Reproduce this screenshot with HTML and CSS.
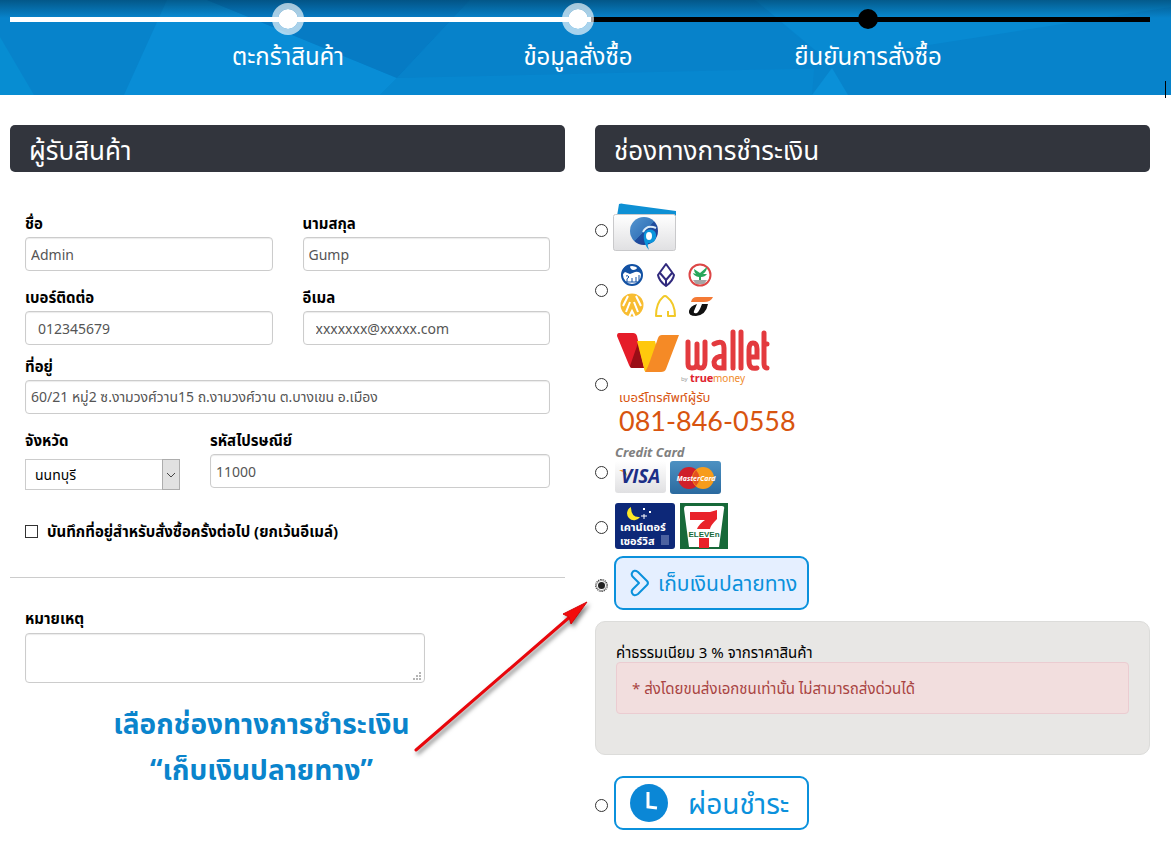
FILE: index.html
```html
<!DOCTYPE html>
<html lang="th">
    <head>
        <meta charset="UTF-8" />
        <meta name="viewport" content="width=device-width, initial-scale=1" />
        <title>ข้อมูลสั่งซื้อ</title>
        <link rel="stylesheet" href="styles.css">
    </head>

    <body>
        <header class="header">
            <svg class="header-bg" viewBox="0 0 1171 95" preserveAspectRatio="none" aria-hidden="true">
                <defs>
                    <linearGradient id="shade" x1="0" y1="0" x2="0" y2="1">
                        <stop offset="0" stop-color="#003a5c" stop-opacity=".6" />
                        <stop offset="1" stop-color="#003a5c" stop-opacity="0" />
                    </linearGradient>
                </defs>
                <rect width="1171" height="95" fill="#0783cb" />
                <path d="M0 37L34 95H0z" fill="#078dd2" />
                <path d="M167 0H207L397 78L380 95H124z" fill="#098dd6" />
                <path d="M207 0H470L397 78z" fill="#067bc4" />
                <path d="M397 78L815 58L812 95H380z" fill="#0787cf" />
                <path d="M470 0H755L833 68L397 78z" fill="#0782ca" />
                <path d="M775 0H1171V7L833 60L815 50L755 0z" fill="#088ad2" />
                <path d="M832 68L848 95H812z" fill="#0a90d8" />
                <rect width="1171" height="18" fill="url(#shade)" />
            </svg>
            <ol class="steps">
                <li class="step done"><span class="dot"></span>ตะกร้าสินค้า</li>
                <li class="step done"><span class="dot"></span>ข้อมูลสั่งซื้อ</li>
                <li class="step"><span class="dot"></span>ยืนยันการสั่งซื้อ</li>
            </ol>
            <span class="caret"></span>
        </header>

        <main class="checkout">
            <section class="column">
                <h2 class="title">ผู้รับสินค้า</h2>
                <form class="form">
                    <div class="row halves">
                        <div class="field">
                            <label for="firstName">ชื่อ</label>
                            <input class="input" type="text" id="firstName" value="Admin">
                        </div>
                        <div class="field">
                            <label for="lastName">นามสกุล</label>
                            <input class="input" type="text" id="lastName" value="Gump">
                        </div>
                    </div>
                    <div class="row halves tight">
                        <div class="field">
                            <label for="phone">เบอร์ติดต่อ</label>
                            <input class="input wide-pad" type="text" id="phone" value="012345679">
                        </div>
                        <div class="field">
                            <label for="email">อีเมล</label>
                            <input class="input wide-pad" type="text" id="email" value="xxxxxxx@xxxxx.com">
                        </div>
                    </div>
                    <div class="row">
                        <div class="field">
                            <label for="address">ที่อยู่</label>
                            <input class="input" type="text" id="address" value="60/21 หมู่2 ซ.งามวงศ์วาน15 ถ.งามวงศ์วาน ต.บางเขน อ.เมือง">
                        </div>
                    </div>
                    <div class="row thirds">
                        <div class="field">
                            <label for="province">จังหวัด</label>
                            <div class="select-wrap">
                                <select class="select" id="province">
                                    <option>นนทบุรี</option>
                                </select>
                                <svg class="select-arrow" width="18" height="31" viewBox="0 0 18 31" aria-hidden="true">
                                    <rect x=".5" y=".5" width="17" height="30" fill="#e1e1e1" stroke="#adadad" />
                                    <path d="M5 14l4 4 4-4" fill="none" stroke="#444" />
                                </svg>
                            </div>
                        </div>
                        <div class="field">
                            <label for="postcode">รหัสไปรษณีย์</label>
                            <input class="input" type="text" id="postcode" value="11000">
                        </div>
                    </div>
                    <div class="remember">
                        <input class="check" type="checkbox" id="remember">
                        <label for="remember">บันทึกที่อยู่สำหรับสั่งซื้อครั้งต่อไป (ยกเว้นอีเมล์)</label>
                    </div>
                    <hr class="line">
                    <div class="field note">
                        <label for="note">หมายเหตุ</label>
                        <div class="note-wrap">
                            <textarea class="input textarea" id="note"></textarea>
                            <svg class="grip" width="9" height="9" viewBox="0 0 9 9" fill="#b5b5b5" aria-hidden="true">
                                <path d="M6 0h2v2H6zM3 3h2v2H3zM6 3h2v2H6zM0 6h2v2H0zM3 6h2v2H3zM6 6h2v2H6z" />
                            </svg>
                        </div>
                    </div>
                </form>
                <p class="callout">เลือกช่องทางการชำระเงิน<br>“เก็บเงินปลายทาง”</p>
            </section>

            <section class="column">
                <h2 class="title">ช่องทางการชำระเงิน</h2>
                <div class="options">
                    <div class="option">
                        <input class="radio" type="radio" name="pay" id="payWallet" aria-label="Wallet">
                        <label for="payWallet">
                            <svg width="200" height="54" viewBox="0 0 200 54">
                                <defs>
                                    <linearGradient id="card" x1="0" y1="0" x2="0" y2="1">
                                        <stop offset="0" stop-color="#fff" />
                                        <stop offset="1" stop-color="#e0e0e2" />
                                    </linearGradient>
                                    <linearGradient id="ball" x1="0" y1="0" x2="1" y2="1">
                                        <stop offset="0" stop-color="#5596d0" />
                                        <stop offset=".5" stop-color="#3979bd" />
                                        <stop offset=".51" stop-color="#1f4fa0" />
                                        <stop offset="1" stop-color="#20338a" />
                                    </linearGradient>
                                </defs>
                                <path d="M4 13L6 1Q8 0 11 1L63 8V13z" fill="#0e90d4" />
                                <rect x=".5" y="11.500" width="62" height="36" rx="2" fill="url(#card)" stroke="#c9c9cb" />
                                <circle cx="31" cy="28" r="14" fill="url(#ball)" />
                                <path d="M30 29Q34 21 43 25" fill="none" stroke="#dcecf8" stroke-width="2" />
                                <path d="M36 47C32 43 30 36 31 31C32 25 42 25 43 31C44 38 39 41 35 40Q34 43 36 47z" fill="#0a95dc" />
                                <ellipse cx="36" cy="33" rx="3" ry="4" fill="#fff" />
                            </svg>
                        </label>
                    </div>
                    <div class="option">
                        <input class="radio" type="radio" name="pay" id="payBank" aria-label="Bank">
                        <label for="payBank">
                            <svg width="200" height="66" viewBox="0 0 200 66" fill="none">
                                <circle cx="19" cy="18" r="10" stroke="#1251a3" stroke-width="2" fill="#fff" />
                                <path d="M9 18V14Q12 8 17 9Q17 12 20 13Q24 13 25 9L29 14V19Q27 14 22 15L17 17L12 15z" fill="#1251a3" />
                                <path d="M13 19Q15 18 16 20Q13 21 14 25M19 25V21M23 25V20M26 24V18M12 25H26" stroke="#1251a3" />
                                <g stroke="#30297d" stroke-width="2" stroke-linejoin="round">
                                    <path d="M53 7L45 18Q46 24 53 29Q60 24 61 18z" />
                                    <path d="M47 16L53 23L59 16M53 23V29" />
                                </g>
                                <circle cx="87" cy="18" r="10.500" stroke="#dc4646" stroke-width="2" fill="#fff" />
                                <path d="M81 12L87 16L94 10Q94 14 90 17H94Q92 20 88 20V24H86V20Q81 19 80 16L83 17Q81 15 81 12z" fill="#27a75b" />
                                <path d="M80 23H94L91 27H83z" fill="#a5a5a5" />
                                <circle cx="19" cy="48" r="11.500" fill="#f8bd31" />
                                <g stroke="#fff" stroke-width="2">
                                    <path d="M15 39L10 49M23 39L28 49" />
                                    <path d="M17 45L13 55M21 45L25 55" />
                                    <path d="M16 60L19 54L22 60" />
                                </g>
                                <path d="M49 59H43Q43 46 50 40Q52 38 54 40Q62 46 62 59H55V54" stroke="#f2c928" stroke-width="2" stroke-linejoin="round" />
                                <path d="M78 45Q79 40 84 40H100Q98 45 91 45z" fill="#f47a35" />
                                <path d="M84 47L81 54Q80 57 84 56Q86 55 89 47H95Q93 58 83 59Q75 59 76 54Q77 49 84 47z" fill="#111" />
                            </svg>
                        </label>
                    </div>
                    <div class="option">
                        <input class="radio" type="radio" name="pay" id="payTrue" aria-label="Wallet by truemoney">
                        <label for="payTrue">
                            <svg width="200" height="122" viewBox="0 0 200 122">
                                <path d="M6 10H20Q23 10 24 13L31 45H20Q17 45 16 42L4 13Q4 10 6 10z" fill="#e51c29" />
                                <path d="M25 20L31 45H20Q17 45 17 43z" fill="#9a0d16" />
                                <path d="M24 18H42L49 44Q47 49 34 49Q31 49 31 45z" fill="#ffc80c" />
                                <path d="M45 15Q46 12 49 12H66L53 46Q52 49 48 49H32Q35 44 37 38z" fill="#f58a26" />
                                <g fill="none" stroke="#e33a3e" stroke-width="5" stroke-linecap="round">
                                    <path d="M75 19V41Q75 45 79 45Q84 45 84 41V21M84 41Q84 45 88 45Q92 45 92 38V19" />
                                    <path d="M101 21Q111 16 111 25V45H107Q101 45 101 39Q102 33 111 33" />
                                    <path d="M120 9V45M128 9V45M136 34H144V26Q144 20 140 20Q136 20 136 27V38Q136 47 144 45M151 10V40Q151 45 154 45M151 21H154" />
                                </g>
                                <text x="68" y="58" class="by">by</text>
                                <text x="77" y="59" class="true">true</text>
                                <text x="100" y="59" class="money">money</text>
                                <text x="6" y="79" class="phone-label">เบอร์โทรศัพท์ผู้รับ</text>
                                <text x="6" y="108" class="phone-number">081-846-0558</text>
                            </svg>
                        </label>
                    </div>
                    <div class="option">
                        <input class="radio" type="radio" name="pay" id="payCard" aria-label="Credit Card">
                        <label for="payCard">
                            <svg width="200" height="54" viewBox="0 0 200 54">
                                <defs>
                                    <linearGradient id="master" x1="0" y1="0" x2="0" y2="1">
                                        <stop offset="0" stop-color="#4d91c2" />
                                        <stop offset="1" stop-color="#2b6a9f" />
                                    </linearGradient>
                                </defs>
                                <text x="2" y="12" class="credit">Credit Card</text>
                                <rect x="2" y="16" width="51" height="32" rx="3" fill="url(#card)" />
                                <path d="M6 25H11Q13 26 14 31Q11 27 6 25z" fill="#f0a01e" />
                                <text x="8" y="38" class="visa">VISA</text>
                                <rect x="57" y="16" width="51" height="33" rx="3" fill="url(#master)" />
                                <circle cx="76" cy="33" r="11" fill="#cf1f2a" />
                                <circle cx="90" cy="33" r="11" fill="#f79c1b" />
                                <path d="M83 25Q90 33 83 41Q76 33 83 25z" fill="#e4511f" />
                                <text x="83" y="36" class="master">MasterCard</text>
                            </svg>
                        </label>
                    </div>
                    <div class="option">
                        <input class="radio" type="radio" name="pay" id="payCounter" aria-label="เคาน์เตอร์เซอร์วิส 7-Eleven">
                        <label for="payCounter">
                            <svg width="200" height="56" viewBox="0 0 200 56">
                                <rect x="2" y="4" width="60" height="46" rx="3" fill="#0d2878" />
                                <path d="M18 8A7 7 0 1 0 27 18Q18 19 18 8z" fill="#fde827" />
                                <path d="M31 15v5M28 17h6" stroke="#fff" />
                                <path d="M30 9h2v2h-2zM36 12h2v2h-2z" fill="#fff" />
                                <text x="7" y="32" class="counter">เคาน์เตอร์</text>
                                <text x="7" y="46" class="counter">เซอร์วิส</text>
                                <path d="M48 37h8M48 39h8M48 41h8M48 43h8M48 45h8" stroke="#8b9bc8" />
                                <rect x="67" y="4" width="48" height="46" fill="#176939" />
                                <path d="M73 7H109Q112 7 111 10L106 48H76L71 10Q71 7 73 7z" fill="#fff" />
                                <path d="M77 13H97L104 11V20Q97 27 97 30H84Q86 25 92 21H77z" fill="#e9232a" />
                                <path d="M86 39H96V49H86z" fill="#e9232a" />
                                <text x="91" y="38" class="eleven">ELEVEn</text>
                            </svg>
                        </label>
                    </div>
                    <div class="option">
                        <input class="radio" type="radio" name="pay" id="payCod" checked>
                        <label class="pay-box selected" for="payCod">
                            <svg width="20" height="28" viewBox="0 0 20 28" fill="none" stroke="#0b91dc" stroke-width="2" stroke-linejoin="round" aria-hidden="true">
                                <path d="M2 4Q4 0 8 3L17 12Q19 14 17 16L8 25Q4 28 2 24Q1 22 3 20L9 14L3 8Q1 6 2 4z" />
                            </svg>
                            <span>เก็บเงินปลายทาง</span>
                        </label>
                    </div>
                    <div class="fee">
                        <p class="fee-text">ค่าธรรมเนียม 3 % จากราคาสินค้า</p>
                        <p class="alert">* ส่งโดยขนส่งเอกชนเท่านั้น ไม่สามารถส่งด่วนได้</p>
                    </div>
                    <div class="option">
                        <input class="radio" type="radio" name="pay" id="payLater">
                        <label class="pay-box later" for="payLater">
                            <svg width="38" height="38" viewBox="0 0 38 38" aria-hidden="true">
                                <circle cx="19" cy="19" r="19" fill="#0b87d6" />
                                <path d="M18 8V23L27 24" fill="none" stroke="#fff" stroke-width="3" />
                            </svg>
                            <span>ผ่อนชำระ</span>
                        </label>
                    </div>
                </div>
            </section>

            <!-- arrow from the callout to the selected option -->
            <svg class="pointer" width="180" height="160" viewBox="0 0 180 160" aria-hidden="true">
                <path d="M4 153L160 18" stroke="#e8070c" stroke-width="3" stroke-linecap="round" />
                <path d="M175 5L159 27L157 20L151 17z" fill="#f40b0b" stroke="#d4060a" />
            </svg>
        </main>
    </body>
</html>
```
FILE: styles.css
```css
* {
    margin: 0;
    padding: 0;
    box-sizing: border-box;
}

body {
    background-color: #fff;
    color: #000;
    font-family: "Noto Sans", "Noto Sans Thai", sans-serif;
    font-size: 14px;
    line-height: 20px;
}

/* Header with order steps */
.header {
    position: relative;
    height: 95px;
    padding: 0 21px 0 10px;
}

.header-bg {
    position: absolute;
    top: 0;
    left: 0;
    width: 100%;
    height: 100%;
}

.steps {
    position: relative;
    display: grid;
    grid-template-columns: repeat(3, 1fr);
    padding: 3px 137px 0 133px;
    list-style: none;
    background: linear-gradient(to right, #fff 51%, #000 51%) 0 17px / 100% 5px no-repeat;
}

.step {
    display: flex;
    flex-direction: column;
    align-items: center;
    gap: 5px;
    color: #fff;
    font-size: 24px;
    line-height: 32px;
}

.dot {
    width: 32px;
    height: 32px;
    border: 6px solid transparent;
    border-radius: 50%;
    background: #000 padding-box;
}

.done .dot {
    border-color: rgba(255, 255, 255, 0.65);
    background-color: #fff;
}

.caret {
    position: absolute;
    top: 81px;
    right: 5px;
    width: 1px;
    height: 17px;
    background-color: #000;
}

/* Two columns */
.checkout {
    position: relative;
    display: grid;
    grid-template-columns: 1fr 1fr;
    gap: 30px;
    padding: 30px 21px 9px 10px;
}

.title {
    height: 47px;
    padding: 0 19px;
    border-radius: 5px;
    background-color: #32353d;
    color: #fff;
    font-size: 26px;
    font-weight: normal;
    line-height: 50px;
}

/* Receiver form */
.form {
    padding: 41px 15px 0;
}

.row {
    display: grid;
    gap: 30px;
    margin-bottom: 16px;
}

.tight {
    margin-bottom: 11px;
}

.halves {
    grid-template-columns: 1fr 1fr;
}

.thirds {
    grid-template-columns: 155fr 340fr;
}

.field {
    display: flex;
    flex-direction: column;
    gap: 4px;
    min-width: 0;
}

.form label {
    font-size: 15px;
    font-weight: bold;
}

.input {
    width: 100%;
    height: 34px;
    padding: 0 5px;
    border: 1px solid #ccc;
    border-radius: 4px;
    background-color: #fff;
    box-shadow: inset 0 1px 1px rgba(0, 0, 0, 0.08);
    color: #555;
    font: inherit;
}

.wide-pad {
    padding: 0 12px;
}

.select-wrap {
    position: relative;
    margin-top: 5px;
}

.select {
    display: block;
    appearance: none;
    width: 100%;
    height: 31px;
    padding: 0 25px 0 9px;
    border: 1px solid #ccc;
    border-radius: 0;
    background-color: #fff;
    color: #000;
    font: inherit;
}

.select-arrow {
    position: absolute;
    top: 0;
    right: 0;
    pointer-events: none;
}

.remember {
    display: flex;
    align-items: center;
    gap: 9px;
    padding-top: 15px;
}

.check {
    appearance: none;
    width: 13px;
    height: 13px;
    border: 1px solid #333;
}

.line {
    margin: 36px -15px 30px;
    border: 0;
    border-top: 1px solid #ccc;
}

.note {
    gap: 5px;
}

.note-wrap {
    position: relative;
    max-width: 400px;
}

.textarea {
    display: block;
    height: 50px;
    resize: none;
}

.grip {
    position: absolute;
    right: 3px;
    bottom: 2px;
}

.callout {
    padding: 17px 52px 0 0;
    color: #0a84cc;
    font-size: 28px;
    font-weight: bold;
    line-height: 46px;
    text-align: center;
}

/* Payment options */
.options {
    padding-top: 31px;
}

.option {
    display: flex;
    align-items: center;
    gap: 5px;
}

.option svg {
    display: block;
    flex: none;
    overflow: visible;
}

.radio {
    appearance: none;
    flex: none;
    width: 13px;
    height: 13px;
    border: 1px solid #333;
    border-radius: 50%;
    background-color: #fff;
}

.radio:checked {
    padding: 2px;
    border: 1px dotted #000;
    background: #222 content-box;
    box-shadow: inset 0 0 0 1px #999;
}

.pay-box {
    display: flex;
    align-items: center;
    gap: 8px;
    width: 195px;
    height: 54px;
    margin: 1px 1px 5px;
    padding: 0 14px;
    border: 2px solid #0b91dc;
    border-radius: 9px;
    color: #0b91dc;
    font-size: 21px;
    line-height: 32px;
    white-space: nowrap;
}

.selected {
    background-color: #e5efff;
}

.later {
    gap: 20px;
    font-size: 28px;
}

.fee {
    height: 134px;
    margin: 6px 0 20px;
    padding: 20px;
    border: 1px solid #dcdcda;
    border-radius: 10px;
    background-color: #e8e7e5;
    font-size: 15px;
}

.alert {
    padding: 15px;
    border: 1px solid #ebccd1;
    border-radius: 4px;
    background-color: #f2dede;
    color: #a94442;
}

.by {
    fill: #999;
    font-size: 6px;
}

.true {
    fill: #e0232f;
    font-size: 11px;
    font-weight: bold;
}

.money {
    fill: #f08a2a;
    font-size: 10px;
}

.phone-label {
    fill: #d8540f;
    font-size: 13px;
}

.phone-number {
    fill: #d8540f;
    font-family: Lato, sans-serif;
    font-size: 27px;
}

.credit {
    fill: #808080;
    font-size: 13px;
    font-style: italic;
    font-weight: bold;
}

.visa {
    fill: #1c2f86;
    font-family: "Open Sans", sans-serif;
    font-size: 19px;
    font-style: italic;
    font-weight: bold;
}

.master {
    fill: #fff;
    font-size: 7px;
    font-style: italic;
    font-weight: bold;
    text-anchor: middle;
}

.counter {
    fill: #fff;
    font-size: 11px;
    font-weight: bold;
}

.eleven {
    fill: #176939;
    font-family: "Liberation Sans", sans-serif;
    font-size: 8px;
    font-weight: bold;
    text-anchor: middle;
}

.pointer {
    position: absolute;
    top: 502px;
    left: 412px;
    filter: drop-shadow(2px 3px 2px rgba(0, 0, 0, 0.5));
    pointer-events: none;
}
```
